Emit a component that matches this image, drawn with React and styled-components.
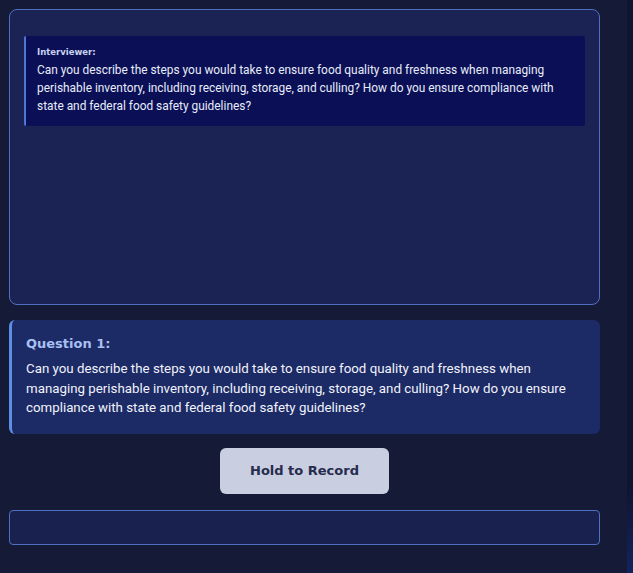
import styled, { createGlobalStyle } from "styled-components";

const Global = createGlobalStyle`
  html, body {
    margin: 0;
    padding: 0;
    background: #151a37;
    height: 100%;
  }
  #root {
    height: 100%;
  }
`;

const Page = styled.div`
  display: flex;
  height: 573px;
  background: #151a37;
  font-family: Roboto, "Liberation Sans", sans-serif;
`;

const Main = styled.div`
  flex: 1;
  display: flex;
  flex-direction: column;
  padding: 9px 27px 0 9px;
`;

const Rail = styled.div`
  width: 6px;
  background: linear-gradient(180deg, #0f1430 0%, #0f1430 85%, #13235e 100%);
`;

const ChatBox = styled.div`
  height: 296px;
  box-sizing: border-box;
  border: 1px solid #4f6fc0;
  border-radius: 8px;
  background: #1a2353;
  padding: 26px 14px 0 14px;
`;

const Bubble = styled.div`
  background: #0a0f56;
  border-left: 2px solid #4d76d6;
  border-radius: 2px;
  padding: 11px 12px 11px 11px;
  color: #e8ecf8;
`;

const Speaker = styled.div`
  font-family: "DejaVu Sans", sans-serif;
  font-size: 8.5px;
  font-weight: bold;
  color: #c9d3f2;
  margin-bottom: 4px;
`;

const BubbleText = styled.div`
  font-size: 11.9px;
  line-height: 18px;
`;

const QuestionCard = styled.div`
  margin-top: 15px;
  background: #1c2a66;
  border-left: 3px solid #5d8ee6;
  border-radius: 6px;
  padding: 16px 14px 16px 14px;
  color: #f1f3fa;
`;

const QuestionTitle = styled.div`
  font-family: "DejaVu Sans", sans-serif;
  font-size: 13px;
  font-weight: bold;
  color: #a9c0f2;
  margin-bottom: 8px;
`;

const QuestionText = styled.div`
  font-size: 13.3px;
  line-height: 19.5px;
`;

const ButtonRow = styled.div`
  display: flex;
  justify-content: center;
  margin-top: 14px;
`;

const RecordButton = styled.button`
  width: 169px;
  height: 46px;
  border: none;
  border-radius: 6px;
  background: #c9cee1;
  color: #262c4d;
  font-family: "DejaVu Sans", sans-serif;
  font-size: 13px;
  font-weight: bold;
  cursor: pointer;
`;

const AnswerBox = styled.div`
  margin-top: 16px;
  height: 35px;
  box-sizing: border-box;
  border: 1px solid #4f6fc0;
  border-radius: 4px;
  background: #19224f;
`;

const question =
  "Can you describe the steps you would take to ensure food quality and freshness when managing perishable inventory, including receiving, storage, and culling? How do you ensure compliance with state and federal food safety guidelines?";

export default function App() {
  return (
    <>
      <Global />
      <Page>
        <Main>
          <ChatBox>
            <Bubble>
              <Speaker>Interviewer:</Speaker>
              <BubbleText>{question}</BubbleText>
            </Bubble>
          </ChatBox>
          <QuestionCard>
            <QuestionTitle>Question 1:</QuestionTitle>
            <QuestionText>{question}</QuestionText>
          </QuestionCard>
          <ButtonRow>
            <RecordButton>Hold to Record</RecordButton>
          </ButtonRow>
          <AnswerBox />
        </Main>
        <Rail />
      </Page>
    </>
  );
}
